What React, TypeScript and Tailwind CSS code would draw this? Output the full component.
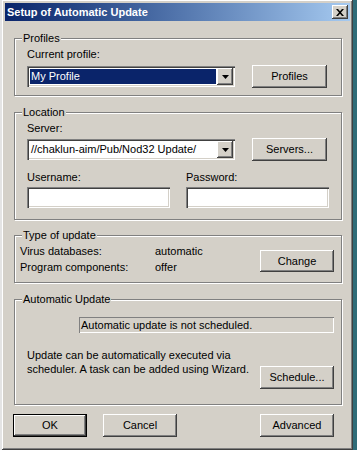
import React from 'react';

const raised =
  'bg-[#d4d0c8] shadow-[inset_-1px_-1px_0_#404040,inset_1px_1px_0_#ffffff,inset_-2px_-2px_0_#808080]';
const sunken =
  'bg-white shadow-[inset_1px_1px_0_#808080,inset_2px_2px_0_#404040,inset_-1px_-1px_0_#ffffff,inset_-2px_-2px_0_#d4d0c8]';

const Button: React.FC<{ label: string; className?: string; isDefault?: boolean }> = ({
  label,
  className = '',
  isDefault,
}) => (
  <div
    className={`flex items-center justify-center text-[11px] text-black ${raised} ${
      isDefault ? 'border border-black' : ''
    } ${className}`}
  >
    {label}
  </div>
);

const GroupBox: React.FC<{ title: string; className?: string; children: React.ReactNode }> = ({
  title,
  className = '',
  children,
}) => (
  <div
    className={`ml-[9px] w-[328px] border border-[#808080] shadow-[inset_1px_1px_0_#ffffff,1px_1px_0_#ffffff] flex flex-col ${className}`}
  >
    <span className="-mt-[7px] ml-[7px] w-fit px-[1px] bg-[#d4d0c8] leading-[13px] text-[11px]">
      {title}
    </span>
    {children}
  </div>
);

const Combo: React.FC<{ value: string; selected?: boolean; className?: string }> = ({
  value,
  selected,
  className = '',
}) => (
  <div className={`flex items-center p-[2px] ${sunken} ${className}`}>
    <div className="flex-1 h-full flex items-center pl-[1px] pr-[1px]">
      <div
        className={`flex-1 h-[15px] flex items-center pl-[1px] text-[11px] ${
          selected ? 'bg-[#0a246a] text-white' : 'text-black'
        }`}
      >
        {value}
      </div>
    </div>
    <div className={`w-[16px] h-full flex items-center justify-center ${raised}`}>
      <svg width="7" height="4" viewBox="0 0 7 4">
        <path d="M0 0h7L3.5 4z" fill="#000" />
      </svg>
    </div>
  </div>
);

const App: React.FC = () => {
  return (
    <div className="w-[357px] h-[450px] overflow-hidden flex bg-[#2f6c78] font-['Liberation_Sans',Arial,sans-serif] text-black">
      <div className="w-[2px] h-full bg-[#e4e4e4]" />
      <div className="w-[351px] h-[450px] p-[3px] bg-[#d4d0c8] flex flex-col shadow-[inset_-1px_-1px_0_#404040,inset_1px_1px_0_#ffffff,inset_-2px_-2px_0_#808080]">
        {/* Title bar */}
        <div className="h-[18px] flex items-center bg-gradient-to-r from-[#0a246a] to-[#a6caf0]">
          <span className="pl-[2px] text-[11px] font-bold text-white leading-none">
            Setup of Automatic Update
          </span>
          <div className={`ml-auto mr-[2px] w-[16px] h-[14px] flex items-center justify-center ${raised}`}>
            <svg width="8" height="7" viewBox="0 0 8 7">
              <path d="M0 0h2l2 2.3L6 0h2L5 3.5 8 7H6L4 4.7 2 7H0l3-3.5z" fill="#000" />
            </svg>
          </div>
        </div>

        {/* Profiles */}
        <GroupBox title="Profiles" className="mt-[17px] h-[58px]">
          <div className="px-[12px] mt-[3px] text-[11px] leading-[13px]">Current profile:</div>
          <div className="px-[12px] mt-[4px] flex items-center h-[23px]">
            <Combo value="My Profile" selected className="w-[208px] h-[21px]" />
            <Button label="Profiles" className="ml-[17px] w-[75px] h-[23px]" />
          </div>
        </GroupBox>

        {/* Location */}
        <GroupBox title="Location" className="mt-[16px] h-[108px]">
          <div className="px-[12px] mt-[3px] text-[11px] leading-[13px]">Server:</div>
          <div className="px-[12px] mt-[3px] flex items-center h-[23px]">
            <Combo value="//chaklun-aim/Pub/Nod32 Update/" className="w-[208px] h-[21px]" />
            <Button label="Servers..." className="ml-[17px] w-[75px] h-[23px]" />
          </div>
          <div className="px-[12px] mt-[10px] flex gap-[16px] text-[11px] leading-[13px]">
            <div className="w-[143px]">Username:</div>
            <div className="w-[143px]">Password:</div>
          </div>
          <div className="px-[12px] mt-[3px] flex gap-[16px]">
            <div className={`w-[143px] h-[21px] ${sunken}`} />
            <div className={`w-[143px] h-[21px] ${sunken}`} />
          </div>
        </GroupBox>

        {/* Type of update */}
        <GroupBox title="Type of update" className="mt-[15px] h-[48px]">
          <div className="pl-[5px] pr-[7px] flex items-start">
            <div className="grid grid-cols-[135px_auto] text-[11px] leading-[16px] mt-[1px]">
              <span>Virus databases:</span>
              <span>automatic</span>
              <span>Program components:</span>
              <span>offer</span>
            </div>
            <Button label="Change" className="ml-auto mt-[8px] w-[74px] h-[22px]" />
          </div>
        </GroupBox>

        {/* Automatic Update */}
        <GroupBox title="Automatic Update" className="mt-[16px] h-[106px]">
          <div className="ml-[64px] mt-[11px] w-[255px] h-[16px] flex items-center pl-[2px] text-[11px] bg-[#d4d0c8] shadow-[inset_1px_1px_0_#808080,inset_-1px_-1px_0_#ffffff]">
            Automatic update is not scheduled.
          </div>
          <div className="pl-[12px] pr-[7px] mt-[15px] flex items-start">
            <p className="text-[11px] leading-[14px]">
              Update can be automatically executed via
              <br />
              scheduler. A task can be added using Wizard.
            </p>
            <Button label="Schedule..." className="ml-auto mt-[18px] w-[74px] h-[23px]" />
          </div>
        </GroupBox>

        {/* Bottom buttons */}
        <div className="mt-[9px] ml-[8px] mr-[16px] flex">
          <Button label="OK" isDefault className="w-[74px] h-[23px]" />
          <Button label="Cancel" className="ml-[16px] w-[74px] h-[23px]" />
          <Button label="Advanced" className="ml-auto w-[74px] h-[23px]" />
        </div>
      </div>
    </div>
  );
};

export default App;
